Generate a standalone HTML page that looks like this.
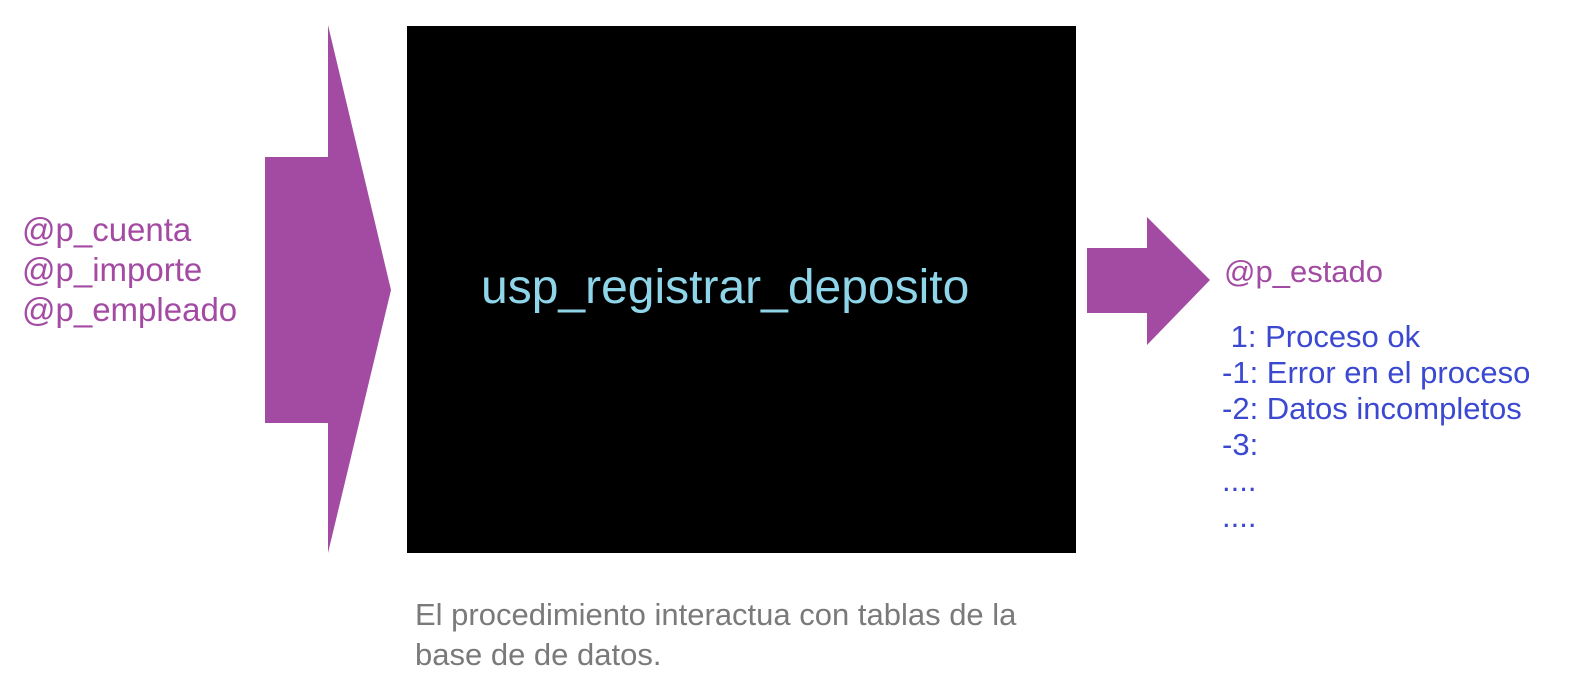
<!DOCTYPE html>
<html><head><meta charset="utf-8"><style>
body{margin:0;width:1575px;height:698px;background:#fff;position:relative;overflow:hidden;font-family:"Liberation Sans",sans-serif}
.t{position:absolute;white-space:pre;margin:0}
</style></head><body>
<svg width="1575" height="698" style="position:absolute;left:0;top:0">
<polygon points="265,157 328,157 328,25 391,290 328,553 328,423 265,423" fill="#a34ba3"/>
<rect x="407" y="26" width="669" height="527" fill="#000"/>
<polygon points="1087,248 1147,248 1147,217 1210,280 1147,345 1147,313 1087,313" fill="#a34ba3"/>
</svg>
<div class="t" style="left:22px;top:210px;font-size:33px;line-height:40px;color:#a34ba3">@p_cuenta
@p_importe
@p_empleado</div>
<div class="t" style="left:481px;top:260px;font-size:48px;line-height:56px;color:#8fd5ea">usp_registrar_deposito</div>
<div class="t" style="left:1224px;top:255px;font-size:31px;line-height:34px;color:#a34ba3">@p_estado</div>
<div class="t" style="left:1222px;top:319px;font-size:31px;line-height:36px;color:#3b48d0"> 1: Proceso ok
-1: Error en el proceso
-2: Datos incompletos
-3:
....
....</div>
<div class="t" style="left:415px;top:595px;font-size:31px;line-height:40px;color:#7a7a7a">El procedimiento interactua con tablas de la
base de de datos.</div>
</body></html>
